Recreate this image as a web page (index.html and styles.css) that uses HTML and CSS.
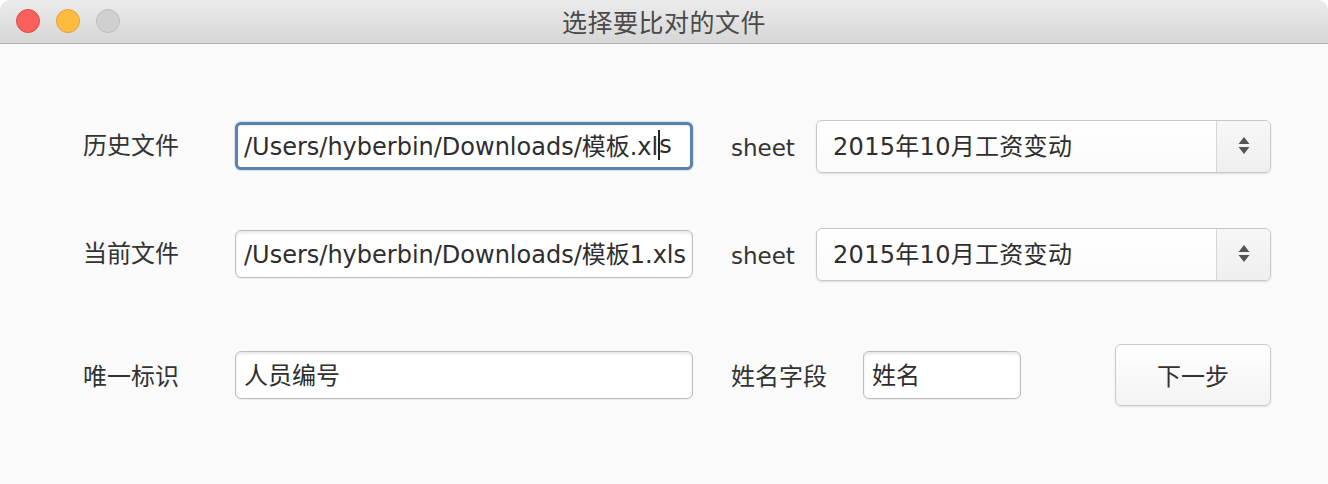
FILE: index.html
```html
<!DOCTYPE html>
<html lang="zh">
<head>
<meta charset="utf-8">
<title>选择要比对的文件</title>
<link rel="stylesheet" href="styles.css">
</head>
<body>
<div class="window">
  <header class="titlebar">
    <div class="lights">
      <span class="light red"></span>
      <span class="light yellow"></span>
      <span class="light gray"></span>
    </div>
    <div class="title">选择要比对的文件</div>
  </header>
  <main class="content">
    <div class="row row1">
      <label class="label">历史文件</label>
      <div class="field wide focused"><span>/Users/hyberbin/Downloads/模板.xl</span><span class="caret"></span><span>s</span></div>
      <label class="label sheet">sheet</label>
      <div class="select">
        <div class="select-value">2015年10月工资变动</div>
        <div class="select-arrows">
          <svg width="14" height="20" viewBox="0 0 14 20"><path d="M7 1 L12.5 8 L1.5 8 Z" fill="#555"/><path d="M1.5 11 L12.5 11 L7 18 Z" fill="#555"/></svg>
        </div>
      </div>
    </div>
    <div class="row row2">
      <label class="label">当前文件</label>
      <div class="field wide"><span>/Users/hyberbin/Downloads/模板1.xls</span></div>
      <label class="label sheet">sheet</label>
      <div class="select">
        <div class="select-value">2015年10月工资变动</div>
        <div class="select-arrows">
          <svg width="14" height="20" viewBox="0 0 14 20"><path d="M7 1 L12.5 8 L1.5 8 Z" fill="#555"/><path d="M1.5 11 L12.5 11 L7 18 Z" fill="#555"/></svg>
        </div>
      </div>
    </div>
    <div class="row row3">
      <label class="label">唯一标识</label>
      <div class="field wide"><span>人员编号</span></div>
      <label class="label name">姓名字段</label>
      <div class="field small"><span>姓名</span></div>
      <button class="button">下一步</button>
    </div>
  </main>
</div>
</body>
</html>
```
FILE: styles.css
```css
* { box-sizing: border-box; }
html, body { margin: 0; padding: 0; background: #ffffff; }
body {
  width: 1328px;
  height: 484px;
  overflow: hidden;
  font-family: "DejaVu Sans", "Noto Sans CJK SC", sans-serif;
  color: #333;
}
.window {
  width: 1328px;
  height: 484px;
  background: #fafafa;
  border-radius: 10px 10px 0 0;
  overflow: hidden;
}
.titlebar {
  height: 44px;
  background: linear-gradient(#ececec, #d6d6d6);
  border-bottom: 1px solid #b3b3b3;
  display: flex;
  align-items: center;
  position: relative;
}
.lights {
  display: flex;
  gap: 16px;
  padding-left: 16px;
  margin-top: -1px;
}
.light {
  width: 24px;
  height: 24px;
  border-radius: 50%;
  display: block;
}
.red { background: #fc605c; border: 1px solid #de4b47; }
.yellow { background: #fdbc40; border: 1px solid #dea236; }
.gray { background: #d0d0d0; border: 1px solid #bcbcbc; }
.title {
  position: absolute;
  left: 0;
  right: 0;
  top: 0;
  height: 43px;
  line-height: 43px;
  text-align: center;
  font-family: "Noto Sans CJK SC", sans-serif;
  font-size: 25px;
  color: #4a4a4a;
  letter-spacing: 0.5px;
}
.content {
  padding: 71px 0 0 83px;
}
.row {
  display: flex;
  align-items: center;
  height: 62px;
}
.row2 { margin-top: 46px; }
.row3 { margin-top: 59px; }
.label {
  font-family: "Noto Sans CJK SC", sans-serif;
  font-size: 24px;
  color: #333;
  width: 152px;
  flex: none;
}
.row1 .label, .row2 .label { padding-bottom: 5px; }
.row3 .label { padding-bottom: 1px; }
.label.sheet {
  font-family: "DejaVu Sans", sans-serif;
  font-size: 23px;
  width: 85px;
  margin-left: 38px;
  padding-bottom: 0;
  padding-top: 3px;
}
.label.name {
  width: 132px;
  margin-left: 38px;
}
.field {
  height: 48px;
  background: #fff;
  border: 1px solid #bdbdbd;
  border-radius: 6px;
  box-shadow: inset 0 2px 3px rgba(0,0,0,0.10), 0 1px 1px rgba(0,0,0,0.06);
  display: flex;
  align-items: center;
  padding-left: 8px;
  padding-bottom: 3px;
  font-size: 24px;
  color: #2e2e2e;
  white-space: nowrap;
  overflow: hidden;
  flex: none;
}
.field.wide { width: 458px; }
.field.small { width: 158px; }
.field.focused {
  border: 3px solid #5b82ae;
  padding-left: 6px;
  box-shadow: 0 0 2px rgba(70,110,160,0.6), inset 0 1px 2px rgba(0,0,0,0.08);
}
.caret {
  display: inline-block;
  width: 2px;
  height: 30px;
  background: #222;
  margin: 0 -1px 0 0;
}
.select {
  width: 455px;
  height: 53px;
  flex: none;
  display: flex;
  border: 1px solid #c8c8c8;
  border-radius: 6px;
  background: linear-gradient(#ffffff, #fbfbfb);
  box-shadow: 0 1px 2px rgba(0,0,0,0.12);
  overflow: hidden;
}
.select-value {
  flex: 1;
  display: flex;
  align-items: center;
  padding-left: 16px;
  padding-bottom: 4px;
  font-size: 24px;
  letter-spacing: 0.3px;
  color: #2e2e2e;
}
.select-arrows {
  width: 54px;
  border-left: 1px solid #d6d6d6;
  background: linear-gradient(#f7f7f7, #efefef);
  display: flex;
  align-items: center;
  justify-content: center;
}
.button {
  margin-left: 94px;
  width: 156px;
  height: 62px;
  flex: none;
  border: 1px solid #cbcbcb;
  border-radius: 6px;
  background: linear-gradient(#ffffff, #f3f3f3);
  box-shadow: 0 1px 2px rgba(0,0,0,0.10);
  font-family: "Noto Sans CJK SC", sans-serif;
  font-size: 24px;
  color: #333;
  padding: 0 0 2px 0;
}
```
